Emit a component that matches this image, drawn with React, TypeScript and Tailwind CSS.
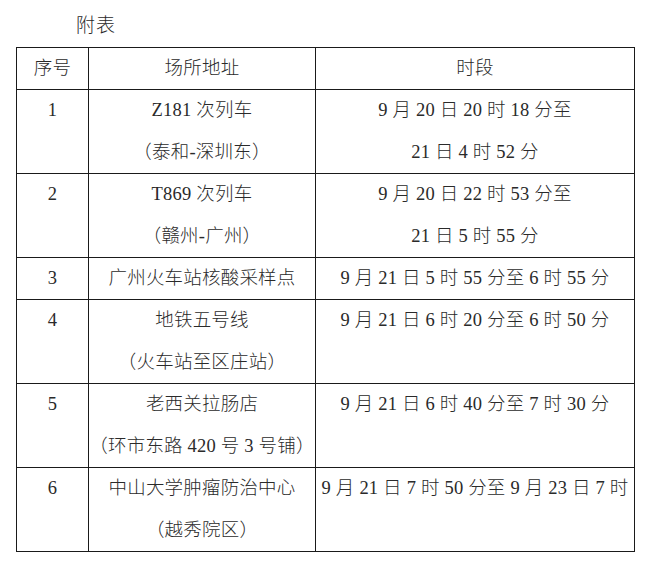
import React from "react";

type Row = { no: string; place: string[]; time: string[] };

const rows: Row[] = [
  { no: "1", place: ["Z181 次列车", "（泰和-深圳东）"], time: ["9 月 20 日 20 时 18 分至", "21 日 4 时 52 分"] },
  { no: "2", place: ["T869 次列车", "（赣州-广州）"], time: ["9 月 20 日 22 时 53 分至", "21 日 5 时 55 分"] },
  { no: "3", place: ["广州火车站核酸采样点"], time: ["9 月 21 日 5 时 55 分至 6 时 55 分"] },
  { no: "4", place: ["地铁五号线", "（火车站至区庄站）"], time: ["9 月 21 日 6 时 20 分至 6 时 50 分"] },
  { no: "5", place: ["老西关拉肠店", "（环市东路 420 号 3 号铺）"], time: ["9 月 21 日 6 时 40 分至 7 时 30 分"] },
  { no: "6", place: ["中山大学肿瘤防治中心", "（越秀院区）"], time: ["9 月 21 日 7 时 50 分至 9 月 23 日 7 时"] },
];

function Lines({ items }: { items: string[] }) {
  return (
    <div className="flex flex-col items-center">
      {items.map((t, i) => (
        <div key={i} className="h-[41.5px] leading-[41.5px] whitespace-nowrap">
          {t}
        </div>
      ))}
    </div>
  );
}

export default function App() {
  return (
    <div
      className="w-[650px] h-[562px] bg-white text-[#2a2a2a] text-[18.5px] tracking-[0.2px] font-light"
      style={{ fontFamily: '"Liberation Serif", "Noto Sans CJK SC", serif' }}
    >
      <div className="h-[47px] pl-[76px] pt-[15px] leading-[22px] text-[19px] tracking-[1px]">附表</div>
      <div className="ml-[16px] w-[619px] border-l border-t border-[#1a1a1a]">
        <div className="grid grid-cols-[72px_227px_319px] h-[42px] border-b border-[#1a1a1a]">
          <div className="border-r border-[#1a1a1a] flex items-center justify-center">序号</div>
          <div className="border-r border-[#1a1a1a] flex items-center justify-center">场所地址</div>
          <div className="border-r border-[#1a1a1a] flex items-center justify-center">时段</div>
        </div>
        {rows.map((r) => {
          const two = r.place.length > 1;
          return (
            <div
              key={r.no}
              className={`grid grid-cols-[72px_227px_319px] border-b border-[#1a1a1a] ${two ? "h-[84px]" : "h-[42px]"}`}
            >
              <div className="border-r border-[#1a1a1a]">
                <Lines items={[r.no]} />
              </div>
              <div className="border-r border-[#1a1a1a]">
                <Lines items={r.place} />
              </div>
              <div className="border-r border-[#1a1a1a]">
                <Lines items={r.time} />
              </div>
            </div>
          );
        })}
      </div>
    </div>
  );
}
